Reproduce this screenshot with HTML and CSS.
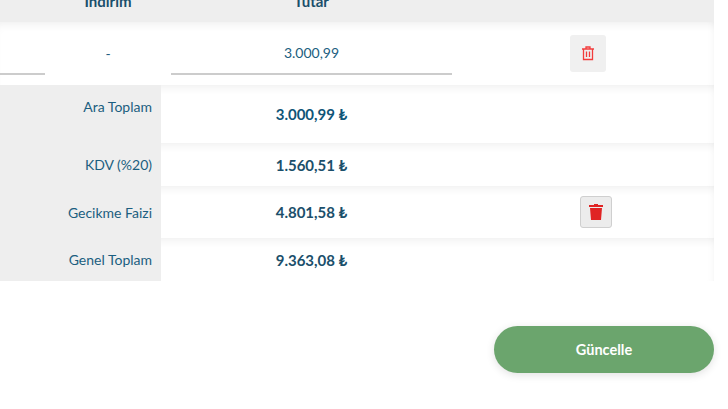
FILE: index.html
```html
<!DOCTYPE html>
<html lang="tr">
<head>
  <meta charset="UTF-8">
  <title>Fatura</title>
  <link rel="stylesheet" href="styles.css">
</head>
<body>
  <div class="table">
    <div class="item-grid head-row">
      <div></div>
      <div class="head-cell">İndirim</div>
      <div class="head-cell">Tutar</div>
      <div></div>
    </div>

    <div class="item-grid item-row">
      <div class="field"></div>
      <div class="plain-cell">-</div>
      <div class="field field-value">3.000,99</div>
      <div class="action-cell">
        <button class="delete-soft" aria-label="Sil">
          <svg width="12" height="15" viewBox="0 0 12 15" fill="none" stroke="#f23c3c" stroke-width="1.3">
            <path d="M0 3h12M4 3V1h4v2M1.5 3v10.5h9V3M4.5 5.5v5.5M7.5 5.5v5.5"/>
          </svg>
        </button>
      </div>
    </div>

    <div class="sum-row sum-first">
      <div class="sum-label label-top">Ara Toplam</div>
      <div class="sum-value value-first">3.000,99 ₺</div>
      <div></div>
    </div>
    <div class="sum-row sum-kdv">
      <div class="sum-label">KDV (%20)</div>
      <div class="sum-value">1.560,51 ₺</div>
      <div></div>
    </div>
    <div class="sum-row sum-late">
      <div class="sum-label">Gecikme Faizi</div>
      <div class="sum-value">4.801,58 ₺</div>
      <div class="action-cell action-wide">
        <button class="delete-solid" aria-label="Sil">
          <svg width="14" height="16" viewBox="0 0 14 16" fill="#e02424">
            <path d="M5 0h4v1h5v2H0V1h5zM1 4h12l-1 12H2z"/>
          </svg>
        </button>
      </div>
    </div>
    <div class="sum-row sum-total">
      <div class="sum-label">Genel Toplam</div>
      <div class="sum-value">9.363,08 ₺</div>
      <div></div>
    </div>
  </div>

  <div class="actions">
    <button class="save-button">Güncelle</button>
  </div>
</body>
</html>
```
FILE: styles.css
```css
body {
  margin: 0;
  height: 409px;
  overflow: hidden;
  background-color: white;
  font-family: Lato, "DejaVu Sans", sans-serif;
  font-size: 14px;
  color: #1b5e80;
}

.table {
  width: 714px;
}

.item-grid {
  display: grid;
  grid-template-columns: 45px 126px 281px 262px;
}

.head-row {
  height: 22px;
  grid-template-rows: 22px;
  overflow: hidden;
  background-color: #eeeeee;
  align-items: end;
}

.head-cell {
  padding-bottom: 12px;
  text-align: center;
  font-size: 15px;
  font-weight: 700;
  color: #1b4f6b;
}

.item-row {
  height: 63px;
  align-items: center;
  box-shadow: inset 0 8px 10px -6px rgba(0,0,0,0.07), inset -8px 0 8px -8px rgba(0,0,0,0.05);
}

.plain-cell {
  text-align: center;
}

.field {
  align-self: start;
  box-sizing: border-box;
  height: 53px;
  border-bottom: 2px solid #cccccc;
}

.field-value {
  padding-top: 22px;
  text-align: center;
}

.action-cell {
  display: flex;
  justify-content: center;
  padding-left: 10px;
}

.action-wide {
  padding-left: 16px;
}

.delete-soft,
.delete-solid {
  display: flex;
  align-items: center;
  justify-content: center;
  padding: 0;
  border-radius: 3px;
  cursor: pointer;
}

.delete-soft {
  width: 36px;
  height: 37px;
  border: none;
  background-color: #f0f0f0;
}

.delete-solid {
  width: 32px;
  height: 32px;
  border: 1px solid #cfcfcf;
  background-color: #ececec;
}

.sum-row {
  display: grid;
  grid-template-columns: 161px 301px 252px;
  align-items: center;
  box-shadow: inset 0 8px 10px -6px rgba(0,0,0,0.07), inset -8px 0 8px -8px rgba(0,0,0,0.05);
}

.sum-first { height: 58px; }
.sum-kdv { height: 43px; }
.sum-late { height: 52px; }
.sum-total { height: 43px; }

.sum-label {
  align-self: stretch;
  display: flex;
  align-items: center;
  justify-content: flex-end;
  padding-right: 9px;
  background-color: #eeeeee;
}

.label-top {
  align-items: flex-start;
  padding-top: 13px;
  height: 45px;
}

.sum-value {
  text-align: center;
  font-size: 15px;
  font-weight: 700;
  color: #1b4f6b;
}

.value-first {
  color: #0f5578;
}

.actions {
  display: flex;
  justify-content: flex-end;
  width: 714px;
  margin-top: 45px;
}

.save-button {
  width: 220px;
  height: 47px;
  border: none;
  border-radius: 24px;
  background-color: #6ba56d;
  box-shadow: 0 2px 8px rgba(0,0,0,0.12);
  color: white;
  font-family: inherit;
  font-size: 14.5px;
  font-weight: 700;
  cursor: pointer;
}
```
